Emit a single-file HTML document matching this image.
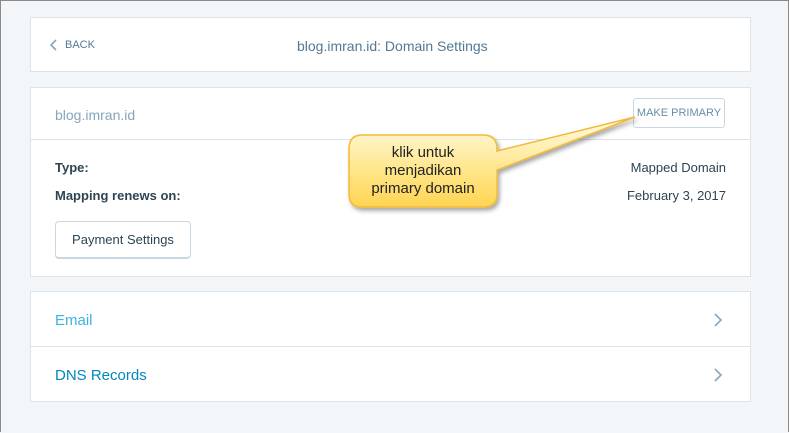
<!DOCTYPE html><html><head><style>
body{margin:0;width:789px;height:433px;background:#f3f6f8;font-family:"Liberation Sans",sans-serif;position:relative;overflow:hidden}
.frame{position:absolute;left:0;top:0;width:787px;height:431px;border:1px solid #8a8a8a;border-bottom:none;border-right:1px solid #8a8a8a}
.card{position:absolute;left:30px;width:719px;background:#fff;border:1px solid #dce4ea}
.t{position:absolute;font-size:13px;color:#2e4453}
</style></head><body>
<div class="frame"></div>
<div class="card" style="top:17px;height:53px">
<svg style="position:absolute;left:18px;top:21px" width="10" height="12"><path d="M7 1 L2 6 L7 11" stroke="#87a6bc" stroke-width="1.6" fill="none"/></svg>
<div class="t" style="left:34px;top:21px;font-size:11px;color:#537994">BACK</div>
<div class="t" style="left:266px;top:20px;font-size:14px;color:#537994">blog.imran.id: Domain Settings</div>
</div>
<div class="card" style="top:87px;height:188px">
<div class="t" style="left:24px;top:19px;font-size:14px;color:#87a6bc">blog.imran.id</div>
<div style="position:absolute;left:602px;top:10px;width:92px;height:30px;border:1px solid #c8d7e1;border-radius:3px;box-sizing:border-box;font-size:11px;color:#668eaa;text-align:center;line-height:28px">MAKE PRIMARY</div>
<div style="position:absolute;left:0;right:0;top:51px;border-top:1px solid #dce4ea"></div>
<div class="t" style="left:24px;top:72px;font-weight:bold">Type:</div>
<div class="t" style="left:24px;top:100px;font-weight:bold">Mapping renews on:</div>
<div class="t" style="right:24px;top:72px">Mapped Domain</div>
<div class="t" style="right:24px;top:100px">February 3, 2017</div>
<div style="position:absolute;left:24px;top:133px;width:136px;height:38px;border:1px solid #c8d7e1;border-bottom-width:2px;border-radius:4px;box-sizing:border-box;font-size:13px;color:#2e4453;text-align:center;line-height:36px">Payment Settings</div>
</div>
<div class="card" style="top:291px;height:109px">
<div class="t" style="left:24px;top:20px;font-size:15px;color:#3db3e0">Email</div>
<div style="position:absolute;left:0;right:0;top:54px;border-top:1px solid #dce4ea"></div>
<div class="t" style="left:24px;top:75px;font-size:15px;color:#0087be">DNS Records</div>
<svg style="position:absolute;left:682px;top:21px" width="10" height="14"><path d="M2 1 L8 7 L2 13" stroke="#87a6bc" stroke-width="1.6" fill="none"/></svg>
<svg style="position:absolute;left:682px;top:76px" width="10" height="14"><path d="M2 1 L8 7 L2 13" stroke="#87a6bc" stroke-width="1.6" fill="none"/></svg>
</div>
<svg style="position:absolute;left:0;top:0" width="789" height="433">
<defs><linearGradient id="g" x1="0" y1="0" x2="0" y2="1"><stop offset="0" stop-color="#fffbe6"/><stop offset="0.6" stop-color="#ffe68a"/><stop offset="1" stop-color="#ffd452"/></linearGradient>
<filter id="s"><feDropShadow dx="2" dy="3" stdDeviation="2" flood-opacity="0.35"/></filter></defs>
<path filter="url(#s)" d="M362 135 H483 Q497 135 497 149 V151 L635 117 L497 170 V194 Q497 207 483 207 H362 Q349 207 349 194 V149 Q349 135 362 135 Z" fill="url(#g)" stroke="#f4b93a" stroke-width="1.5"/>
<text x="423" y="157" font-family="Liberation Sans,sans-serif" font-size="15" fill="#222" text-anchor="middle">klik untuk</text>
<text x="423" y="175" font-family="Liberation Sans,sans-serif" font-size="15" fill="#222" text-anchor="middle">menjadikan</text>
<text x="423" y="193" font-family="Liberation Sans,sans-serif" font-size="15" fill="#222" text-anchor="middle">primary domain</text>
</svg>
</body></html>
